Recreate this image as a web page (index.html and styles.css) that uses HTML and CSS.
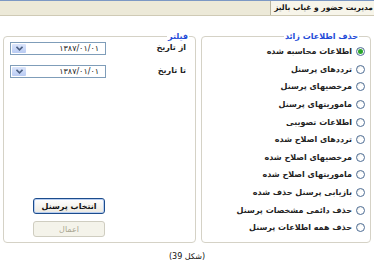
FILE: index.html
```html
<!DOCTYPE html>
<html lang="fa" dir="rtl">
<head>
  <meta charset="UTF-8" />
  <title>مدیریت حضور و غیاب بالیز</title>
  <link rel="stylesheet" href="styles.css">
</head>
<body>
  <div class="topbar">
    <div class="title">مدیریت حضور و غیاب بالیز</div>
  </div>

  <div class="main">
    <fieldset class="box cleanup">
      <legend>حذف اطلاعات زائد</legend>
      <div class="opt"><span class="radio on"></span>اطلاعات محاسبه شده</div>
      <div class="opt"><span class="radio"></span>ترددهای پرسنل</div>
      <div class="opt"><span class="radio"></span>مرخصیهای پرسنل</div>
      <div class="opt"><span class="radio"></span>ماموریتهای پرسنل</div>
      <div class="opt"><span class="radio"></span>اطلاعات تصویبی</div>
      <div class="opt"><span class="radio"></span>ترددهای اصلاح شده</div>
      <div class="opt"><span class="radio"></span>مرخصیهای اصلاح شده</div>
      <div class="opt"><span class="radio"></span>ماموریتهای اصلاح شده</div>
      <div class="opt"><span class="radio"></span>بازیابی پرسنل حذف شده</div>
      <div class="opt"><span class="radio"></span>حذف دائمی مشخصات پرسنل</div>
      <div class="opt"><span class="radio"></span>حذف همه اطلاعات پرسنل</div>
    </fieldset>

    <fieldset class="box filter">
      <legend>فیلتر</legend>
      <div class="field">
        <span class="lbl">از تاریخ</span>
        <div class="combo"><span class="val">۱۳۸۷/۰۱/۰۱</span><span class="drop"><svg width="7" height="5" viewBox="0 0 7 5"><path d="M0.5 0.8 L3.5 3.8 L6.5 0.8" fill="none" stroke="#4d6185" stroke-width="1.6"/></svg></span></div>
      </div>
      <div class="field">
        <span class="lbl">تا تاریخ</span>
        <div class="combo"><span class="val">۱۳۸۷/۰۱/۰۱</span><span class="drop"><svg width="7" height="5" viewBox="0 0 7 5"><path d="M0.5 0.8 L3.5 3.8 L6.5 0.8" fill="none" stroke="#4d6185" stroke-width="1.6"/></svg></span></div>
      </div>
      <div class="actions">
        <button class="btn">انتخاب پرسنل</button>
        <button class="btn off">اعمال</button>
      </div>
    </fieldset>
  </div>

  <div class="caption">(شکل 39)</div>
</body>
</html>
```

FILE: styles.css
```css
* {
  box-sizing: border-box;
}
body {
  margin: 0;
  width: 374px;
  height: 276px;
  background: #fff;
  font-family: "DejaVu Sans", Tahoma, sans-serif;
  font-size: 8px;
  font-weight: bold;
  color: #222;
  overflow: hidden;
}
.topbar {
  height: 16px;
  border-top: 1px solid #7c98c4;
  border-bottom: 1px solid #cfcab5;
  background: #ece9d8;
  display: flex;
}
.title {
  min-width: 97px;
  border-left: 1px solid #b9b5a0;
  background: #f7f5ea;
  line-height: 14px;
  padding: 0 1px 0 3px;
  font-size: 7.5px;
  white-space: nowrap;
  color: #111;
}
.main {
  display: flex;
  align-items: flex-start;
  gap: 5px;
  padding: 16px 3px 0 3px;
}
.box {
  margin: 0;
  padding: 0;
  height: 211px;
  border: 1px solid #d5d2c6;
  border-radius: 4px;
  min-width: 0;
}
.box legend {
  color: #1e4ad8;
  font-size: 8px;
  padding: 0 1px;
  margin-right: 6px;
  line-height: 9px;
}
.cleanup {
  width: 170px;
  padding: 2px 5px 0 0;
}
.filter {
  width: 193px;
  position: relative;
}
.opt {
  display: flex;
  align-items: center;
  height: 17.6px;
  white-space: nowrap;
}
.radio {
  width: 9px;
  height: 9px;
  border: 1px solid #4f6e96;
  border-radius: 50%;
  background: radial-gradient(circle at 60% 60%, #fff 40%, #dcdcd4 100%);
  margin-left: 4px;
  display: flex;
  align-items: center;
  justify-content: center;
}
.radio.on::after {
  content: "";
  width: 5px;
  height: 5px;
  border-radius: 50%;
  background: #2aa52a;
}
.field {
  display: flex;
  align-items: flex-start;
  margin: 1px 9px 10px 0;
  height: 13px;
}
.lbl {
  width: 45px;
  line-height: 11px;
}
.combo {
  margin-right: 35px;
  width: 96px;
  height: 13px;
  border: 1px solid #7f9db9;
  display: flex;
  align-items: center;
  justify-content: space-between;
  padding: 0 1px;
}
.val {
  font-weight: normal;
  font-size: 8px;
  padding-right: 5px;
  color: #222;
}
.drop {
  width: 14px;
  height: 9px;
  background: linear-gradient(#dbe5fb, #b9cbf3);
  border-radius: 1px;
  display: flex;
  align-items: center;
  justify-content: center;
}
.actions {
  position: absolute;
  left: 29px;
  bottom: 5px;
  display: flex;
  flex-direction: column;
  gap: 7px;
}
.btn {
  width: 72px;
  height: 16px;
  padding: 0;
  font-family: inherit;
  font-size: 8px;
  font-weight: bold;
  color: #111;
  border: 1px solid #1c4c8c;
  border-radius: 3px;
  background: linear-gradient(#ffffff, #ece9e0);
  box-shadow: inset 0 0 0 1px #b7cdf0;
}
.btn.off {
  border-color: #cfcdc0;
  background: #f4f3ea;
  box-shadow: none;
  color: #a9a692;
  font-weight: normal;
}
.caption {
  text-align: center;
  margin-top: 9px;
  font-size: 8px;
  font-weight: normal;
  color: #111;
}
```
